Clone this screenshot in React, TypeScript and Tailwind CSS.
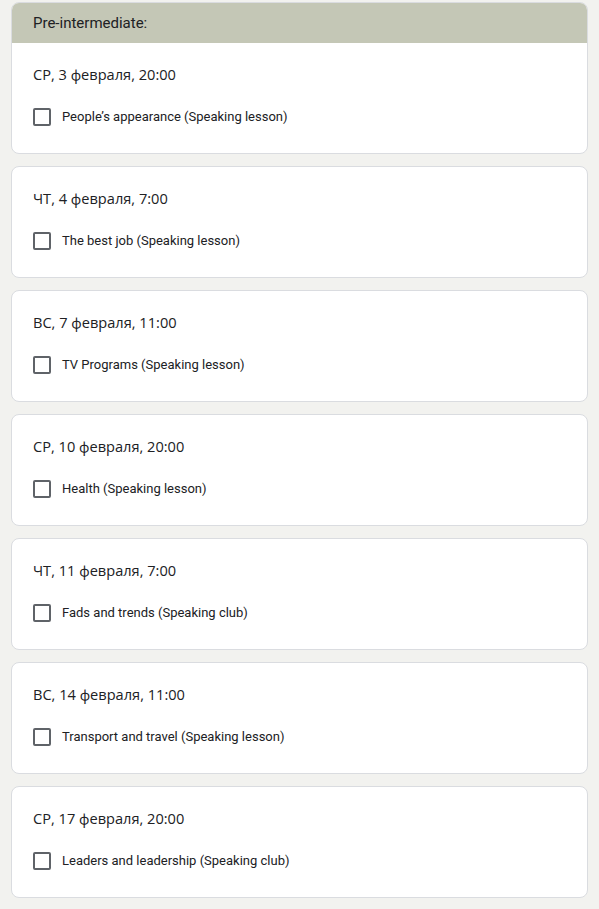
const slots = [
  { date: "СР, 3 февраля, 20:00", topic: "People’s appearance (Speaking lesson)" },
  { date: "ЧТ, 4 февраля, 7:00", topic: "The best job (Speaking lesson)" },
  { date: "ВС, 7 февраля, 11:00", topic: "TV Programs (Speaking lesson)" },
  { date: "СР, 10 февраля, 20:00", topic: "Health (Speaking lesson)" },
  { date: "ЧТ, 11 февраля, 7:00", topic: "Fads and trends (Speaking club)" },
  { date: "ВС, 14 февраля, 11:00", topic: "Transport and travel (Speaking lesson)" },
  { date: "СР, 17 февраля, 20:00", topic: "Leaders and leadership (Speaking club)" },
];

function SlotBody({ date, topic }: { date: string; topic: string }) {
  return (
    <div className="px-[21px] pt-[21px] pb-[27px]">
      <div className="text-[14.6px] leading-[20px] text-[#202124] font-['Open_Sans',sans-serif]">{date}</div>
      <label className="mt-[24px] flex items-center gap-[11px] cursor-pointer">
        <span className="w-[18px] h-[18px] border-2 border-[#5f6368] rounded-[2px] shrink-0" />
        <span className="text-[13px] leading-[18px] text-[#202124] font-['Roboto',sans-serif]">{topic}</span>
      </label>
    </div>
  );
}

export default function App() {
  return (
    <div className="min-h-[909px] bg-[#f2f2ef] pt-[2px] pl-[11px] pb-[12px] flex flex-col gap-[12px]">
      {slots.map((s, i) => (
        <div key={i} className="w-[577px] bg-white border border-[#dadce0] rounded-[8px] overflow-hidden">
          {i === 0 && (
            <div className="h-[40px] bg-[#c4c7b6] flex items-center px-[21px] text-[15px] text-[#202124] font-['Roboto',sans-serif]">
              Pre-intermediate:
            </div>
          )}
          <SlotBody date={s.date} topic={s.topic} />
        </div>
      ))}
    </div>
  );
}
